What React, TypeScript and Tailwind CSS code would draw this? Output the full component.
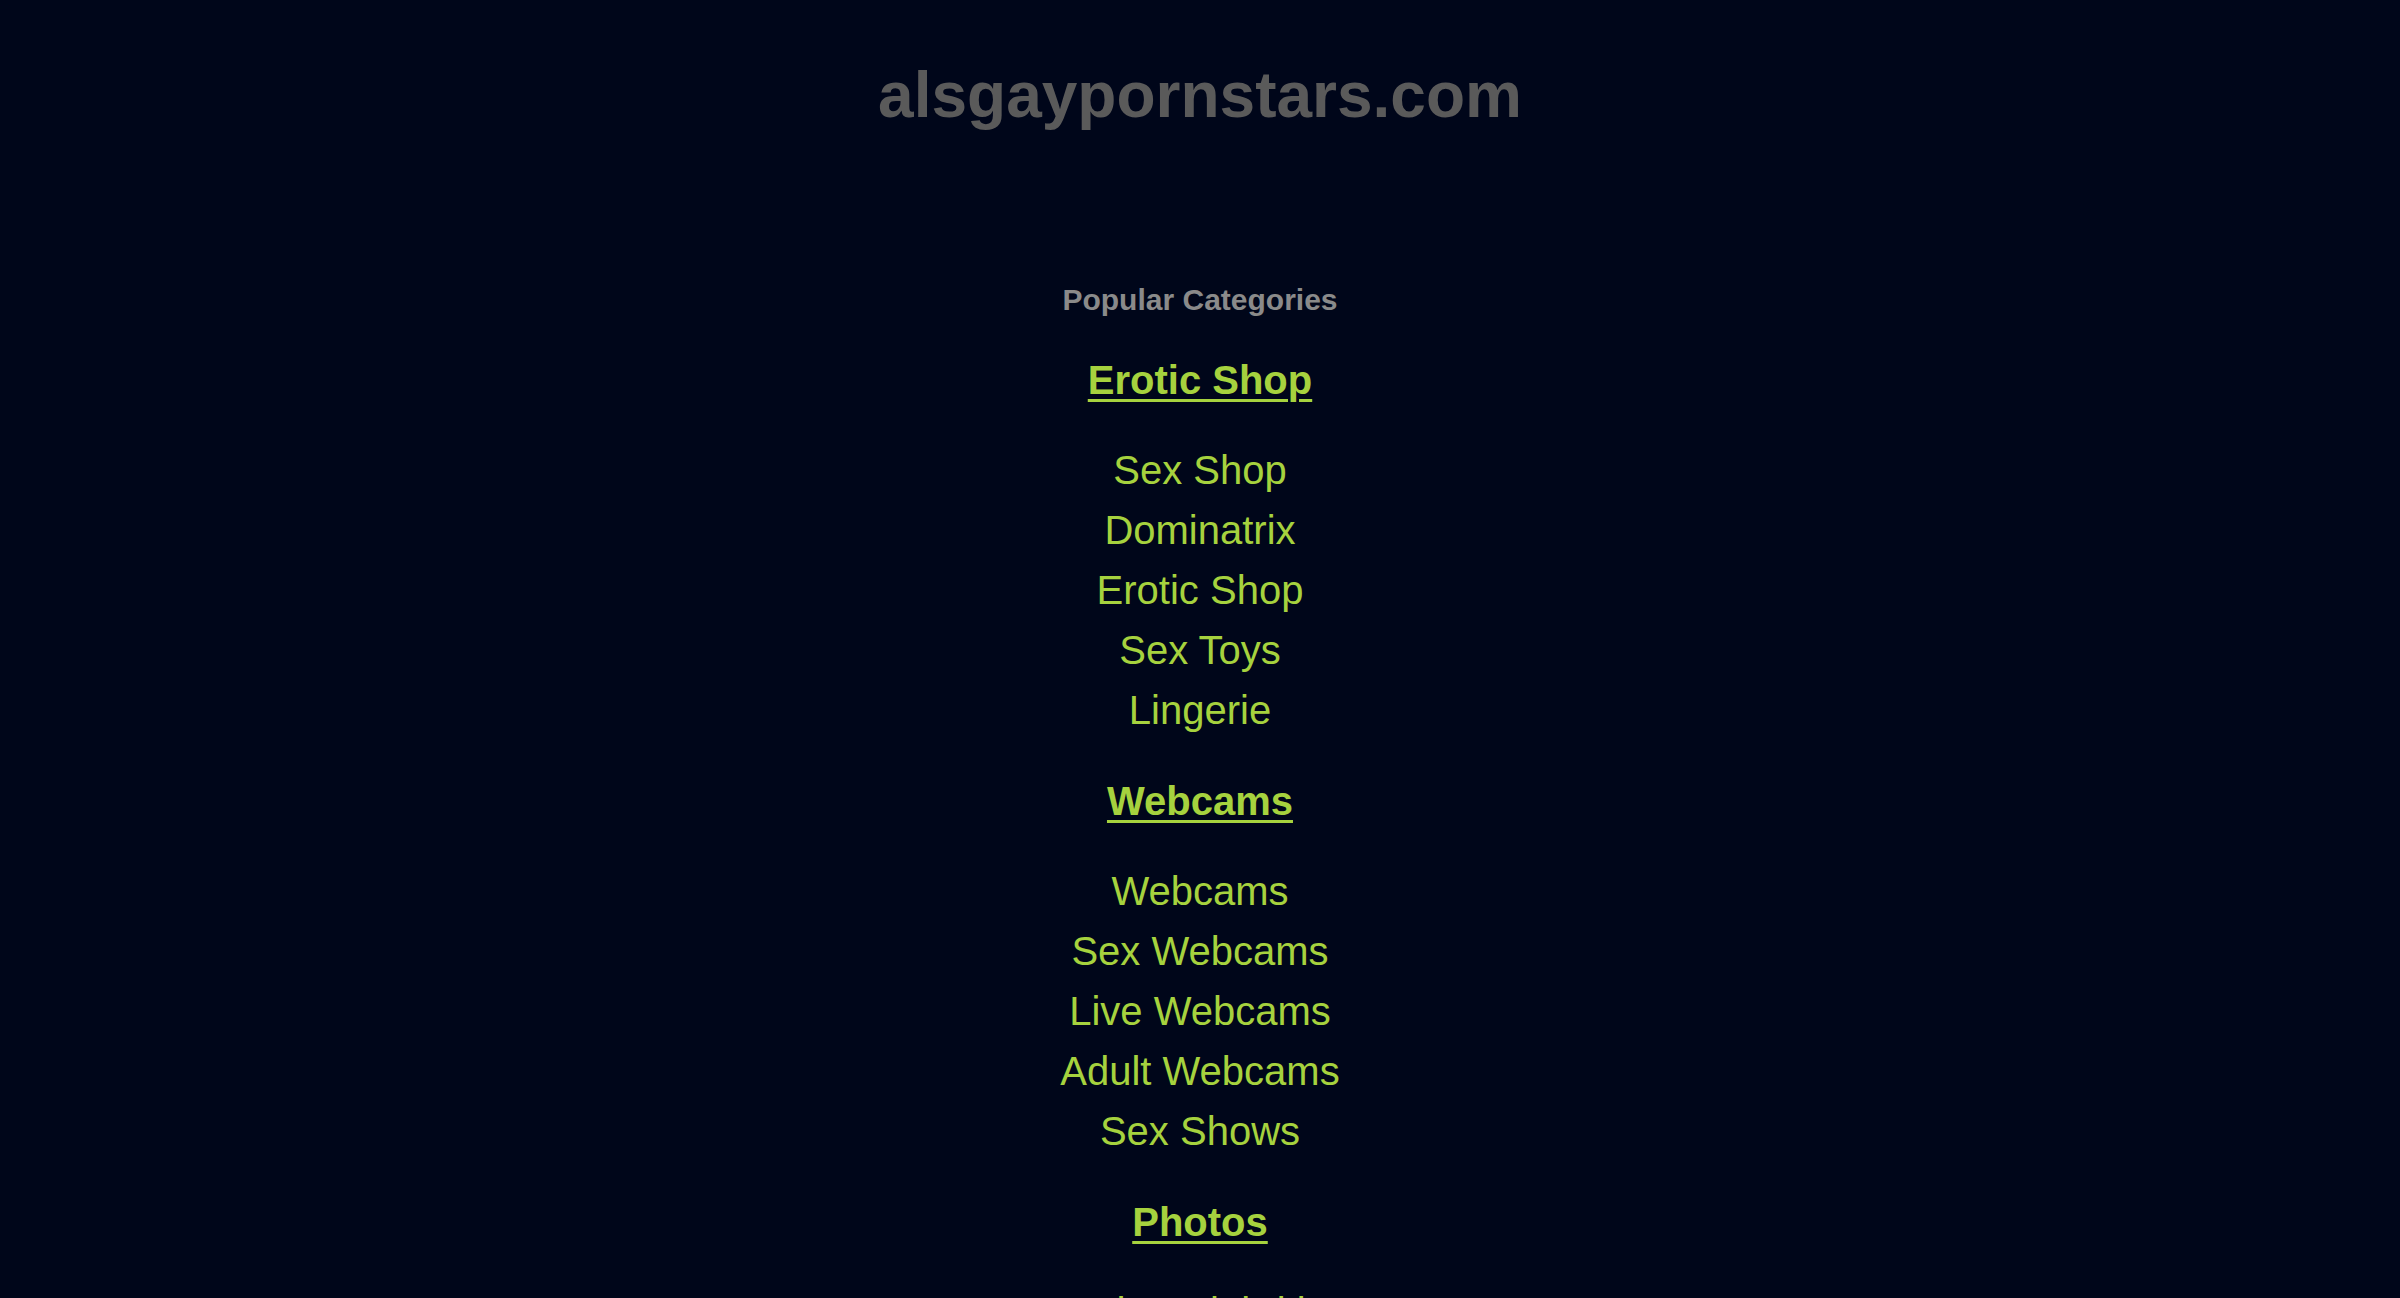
const sections = [
  {
    title: "Erotic Shop",
    links: ["Sex Shop", "Dominatrix", "Erotic Shop", "Sex Toys", "Lingerie"],
  },
  {
    title: "Webcams",
    links: ["Webcams", "Sex Webcams", "Live Webcams", "Adult Webcams", "Sex Shows"],
  },
  {
    title: "Photos",
    links: ["Nude Celebrities", "Amateur Photos", "Erotic Photos"],
  },
];

const App = () => {
  return (
    <div className="min-h-screen bg-[#00061a] font-['Liberation_Sans',Arial,sans-serif] text-center">
      <div className="pt-[58px]">
        <h1 className="text-[64px] leading-[74px] font-bold text-[#5a5a5a]">
          alsgaypornstars.com
        </h1>
      </div>

      <div className="mt-[148px] flex flex-col items-center">
        <h2 className="text-[30px] leading-[40px] font-bold text-[#8a8a8a]">
          Popular Categories
        </h2>

        <div className="mt-[30px] flex flex-col gap-[31px] items-center">
          {sections.map((section) => (
            <div key={section.title} className="flex flex-col items-center">
              <a
                href="#"
                className="text-[40px] leading-[60px] font-bold text-[#a6d23e] underline underline-offset-[5px] decoration-[3px]"
              >
                {section.title}
              </a>
              <ul className="mt-[30px] flex flex-col items-center">
                {section.links.map((link, i) => (
                  <li key={i}>
                    <a href="#" className="text-[40px] leading-[60px] text-[#a6d23e]">
                      {link}
                    </a>
                  </li>
                ))}
              </ul>
            </div>
          ))}
        </div>
      </div>
    </div>
  );
};

export default App;
